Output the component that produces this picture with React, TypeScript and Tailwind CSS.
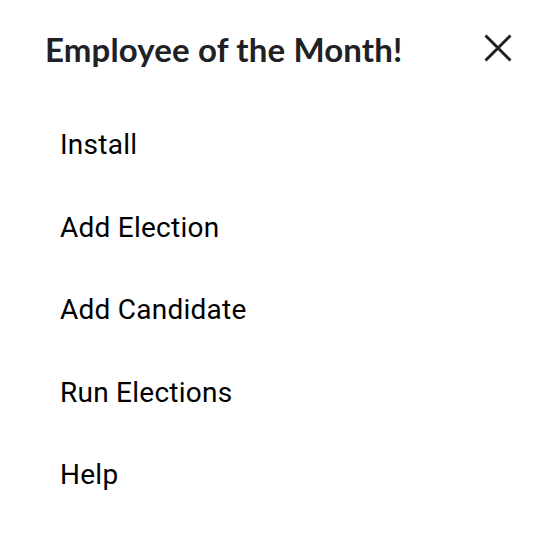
export default function App() {
  const items = ["Install", "Add Election", "Add Candidate", "Run Elections", "Help"];
  return (
    <div className="w-[548px] h-[548px] bg-white text-[#202124]">
      <div className="flex items-start justify-between pl-[45px] pr-[36px] pt-[29px]">
        <h1 className="text-[33px] leading-[40px] font-bold tracking-[0.15px] font-['Lato','Inter',sans-serif]">
          Employee of the Month!
        </h1>
        <button className="mt-[5px] w-[28px] h-[28px] flex items-center justify-center">
          <svg width="28" height="28" viewBox="0 0 28 28" fill="none">
            <path d="M1.5 1.5 L26.5 26.5 M26.5 1.5 L1.5 26.5" stroke="#202124" strokeWidth="3" />
          </svg>
        </button>
      </div>
      <ul className="mt-[56px] pl-[60px] font-['Roboto',sans-serif] text-[28px] tracking-[0.25px] text-black">
        {items.map((it) => (
          <li key={it} className="h-[82.5px] leading-[40px]">
            {it}
          </li>
        ))}
      </ul>
    </div>
  );
}
